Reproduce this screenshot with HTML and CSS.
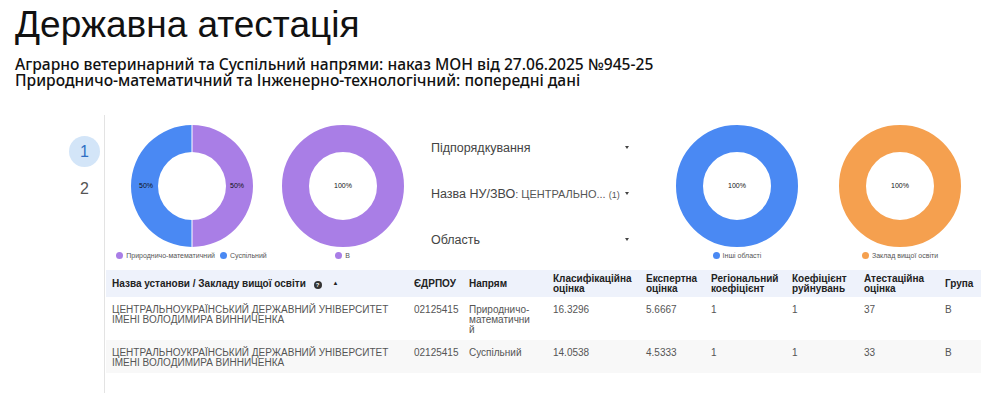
FILE: index.html
```html
<!DOCTYPE html>
<html lang="uk">
<head>
    <meta charset="UTF-8">
    <title>Державна атестація</title>
    <link rel="stylesheet" href="styles.css">
</head>
<body>
    <div class="header">
        <h1>Державна атестація</h1>
        <p class="subtitle">Аграрно ветеринарний та Суспільний напрями: наказ МОН від 27.06.2025 №945-25<br>Природничо-математичний та Інженерно-технологічний: попередні дані</p>
    </div>

    <div class="main">
        <div class="pages">
            <div class="page active">1</div>
            <div class="page">2</div>
        </div>

        <div class="content">
            <div class="charts">
                <div class="chart chart-1">
                    <svg width="124" height="124" viewBox="0 0 124 124">
                        <path d="M62 1 A61 61 0 0 0 62 123 L62 96 A34 34 0 0 1 62 28 Z" fill="#4a89f3"/>
                        <path d="M62 1 A61 61 0 0 1 62 123 L62 96 A34 34 0 0 0 62 28 Z" fill="#a97ee6"/>
                        <line x1="62" y1="0" x2="62" y2="28" stroke="#fff" stroke-width="1"/>
                        <line x1="62" y1="96" x2="62" y2="124" stroke="#fff" stroke-width="1"/>
                        <text x="9" y="64" class="pct">50%</text>
                        <text x="114" y="64" class="pct" text-anchor="end">50%</text>
                    </svg>
                    <div class="legend">
                        <span class="item"><i class="dot purple"></i>Природничо-математичний</span>
                        <span class="item"><i class="dot blue"></i>Суспільний</span>
                    </div>
                </div>
                <div class="chart chart-2">
                    <svg width="124" height="124" viewBox="0 0 124 124">
                        <circle cx="62" cy="62" r="47.5" fill="none" stroke="#a97ee6" stroke-width="27"/>
                        <text x="62" y="64" class="pct" text-anchor="middle">100%</text>
                    </svg>
                    <div class="legend">
                        <span class="item"><i class="dot purple"></i>В</span>
                    </div>
                </div>

                <div class="filters">
                    <div class="filter"><span>Підпорядкування</span><i class="caret"></i></div>
                    <div class="filter"><span>Назва НУ/ЗВО<small>: ЦЕНТРАЛЬНО...</small><small class="count">(1)</small></span><i class="caret"></i></div>
                    <div class="filter"><span>Область</span><i class="caret"></i></div>
                </div>

                <div class="chart chart-3">
                    <svg width="124" height="124" viewBox="0 0 124 124">
                        <circle cx="62" cy="62" r="47.5" fill="none" stroke="#4a89f3" stroke-width="27"/>
                        <text x="62" y="64" class="pct" text-anchor="middle">100%</text>
                    </svg>
                    <div class="legend">
                        <span class="item"><i class="dot blue"></i>Інші області</span>
                    </div>
                </div>
                <div class="chart chart-4">
                    <svg width="124" height="124" viewBox="0 0 124 124">
                        <circle cx="62" cy="62" r="47.5" fill="none" stroke="#f5a04f" stroke-width="27"/>
                        <text x="62" y="64" class="pct" text-anchor="middle">100%</text>
                    </svg>
                    <div class="legend">
                        <span class="item"><i class="dot orange"></i>Заклад вищої освіти</span>
                    </div>
                </div>
            </div>

            <table class="results">
                <colgroup>
                    <col style="width: 302px">
                    <col style="width: 55px">
                    <col style="width: 84px">
                    <col style="width: 93px">
                    <col style="width: 65px">
                    <col style="width: 81px">
                    <col style="width: 72px">
                    <col style="width: 81px">
                    <col style="width: 42px">
                </colgroup>
                <thead>
                    <tr>
                        <th>Назва установи / Закладу вищої освіти <span class="info">?</span> <span class="sort">▲</span></th>
                        <th>ЄДРПОУ</th>
                        <th>Напрям</th>
                        <th>Класифікаційна оцінка</th>
                        <th>Експертна оцінка</th>
                        <th>Регіональний коефіцієнт</th>
                        <th>Коефіцієнт руйнувань</th>
                        <th>Атестаційна оцінка</th>
                        <th>Група</th>
                    </tr>
                </thead>
                <tbody>
                    <tr>
                        <td>ЦЕНТРАЛЬНОУКРАЇНСЬКИЙ ДЕРЖАВНИЙ УНІВЕРСИТЕТ ІМЕНІ ВОЛОДИМИРА ВИННИЧЕНКА</td>
                        <td>02125415</td>
                        <td class="wrap">Природничо-математичний</td>
                        <td>16.3296</td>
                        <td>5.6667</td>
                        <td>1</td>
                        <td>1</td>
                        <td>37</td>
                        <td>В</td>
                    </tr>
                    <tr class="alt">
                        <td>ЦЕНТРАЛЬНОУКРАЇНСЬКИЙ ДЕРЖАВНИЙ УНІВЕРСИТЕТ ІМЕНІ ВОЛОДИМИРА ВИННИЧЕНКА</td>
                        <td>02125415</td>
                        <td>Суспільний</td>
                        <td>14.0538</td>
                        <td>4.5333</td>
                        <td>1</td>
                        <td>1</td>
                        <td>33</td>
                        <td>В</td>
                    </tr>
                </tbody>
            </table>
        </div>
    </div>
</body>
</html>
```

FILE: styles.css
```css
body {
    margin: 0;
    font-family: "Liberation Sans", Arial, sans-serif;
    color: #111;
    background: #fff;
}
.header {
    padding: 5px 15px 0;
    height: 115px;
    box-sizing: border-box;
}
h1 {
    margin: 0;
    font-size: 37px;
    font-weight: 400;
    line-height: 40px;
}
.subtitle {
    margin: 11px 0 0;
    font-family: "Noto Sans", sans-serif;
    font-size: 15.6px;
    font-weight: 500;
    line-height: 16px;
}
.main {
    display: flex;
    height: 278px;
}
.pages {
    width: 105px;
    border-right: 1px solid #e3e3e3;
    display: flex;
    flex-direction: column;
    align-items: flex-end;
    padding: 21px 4px 0 0;
    box-sizing: border-box;
    flex-shrink: 0;
}
.page {
    width: 31px;
    height: 31px;
    border-radius: 50%;
    font-size: 16px;
    line-height: 31px;
    text-align: center;
    color: #555;
    margin-bottom: 6px;
}
.page.active {
    background: #d3e5f8;
    color: #2f6fc4;
}
.content {
    flex: 1;
    padding-left: 1px;
}
.charts {
    display: flex;
    height: 152px;
    padding-top: 9px;
    box-sizing: border-box;
}
.chart {
    display: flex;
    flex-direction: column;
    align-items: center;
}
.chart svg {
    display: block;
}
.chart-1 { width: 171px; }
.chart-2 { width: 131px; }
.chart-3 { width: 176px; }
.chart-4 { width: 150px; }
.pct {
    font-size: 7px;
    fill: #111;
    font-family: "Liberation Sans", Arial, sans-serif;
}
.legend {
    margin-top: 4px;
    display: flex;
    gap: 5px;
    font-size: 7px;
    color: #555;
    white-space: nowrap;
}
.item {
    display: flex;
    align-items: center;
}
.dot {
    width: 7px;
    height: 7px;
    border-radius: 50%;
    margin-right: 3px;
}
.blue { background: #4a89f3; }
.purple { background: #a97ee6; }
.orange { background: #f5a04f; }
.filters {
    width: 241px;
    padding: 16px 0 0 23px;
    box-sizing: border-box;
}
.filter {
    width: 198px;
    height: 46px;
    display: flex;
    justify-content: space-between;
    font-size: 12.5px;
    color: #444;
    line-height: 16px;
}
.filter small {
    font-size: 11px;
    color: #555;
}
.filter .count {
    font-size: 9px;
    margin-left: 3px;
}
.caret {
    width: 0;
    height: 0;
    margin-top: 6px;
    border-left: 2.5px solid transparent;
    border-right: 2.5px solid transparent;
    border-top: 3px solid #444;
}
.results {
    border-collapse: collapse;
    table-layout: fixed;
    width: 875px;
    margin-top: 3px;
    font-size: 10px;
}
.results th {
    background: #eef2fb;
    text-align: left;
    font-weight: 700;
    color: #222;
    height: 27px;
    padding: 0 6px;
    line-height: 10px;
    vertical-align: middle;
}
.results td {
    color: #555;
    padding: 8px 6px 0;
    line-height: 10px;
    vertical-align: top;
}
.results tbody tr {
    height: 43px;
}
.results tbody tr.alt {
    height: 33px;
    background: #f8f8f8;
}
.results td.wrap {
    overflow-wrap: anywhere;
    padding-right: 15px;
}
.info {
    display: inline-block;
    width: 8px;
    height: 8px;
    border-radius: 50%;
    background: #333;
    color: #fff;
    font-size: 6px;
    line-height: 8px;
    text-align: center;
    vertical-align: 0;
    margin-left: 5px;
}
.sort {
    font-size: 6px;
    margin-left: 8px;
    vertical-align: 2px;
}
```
